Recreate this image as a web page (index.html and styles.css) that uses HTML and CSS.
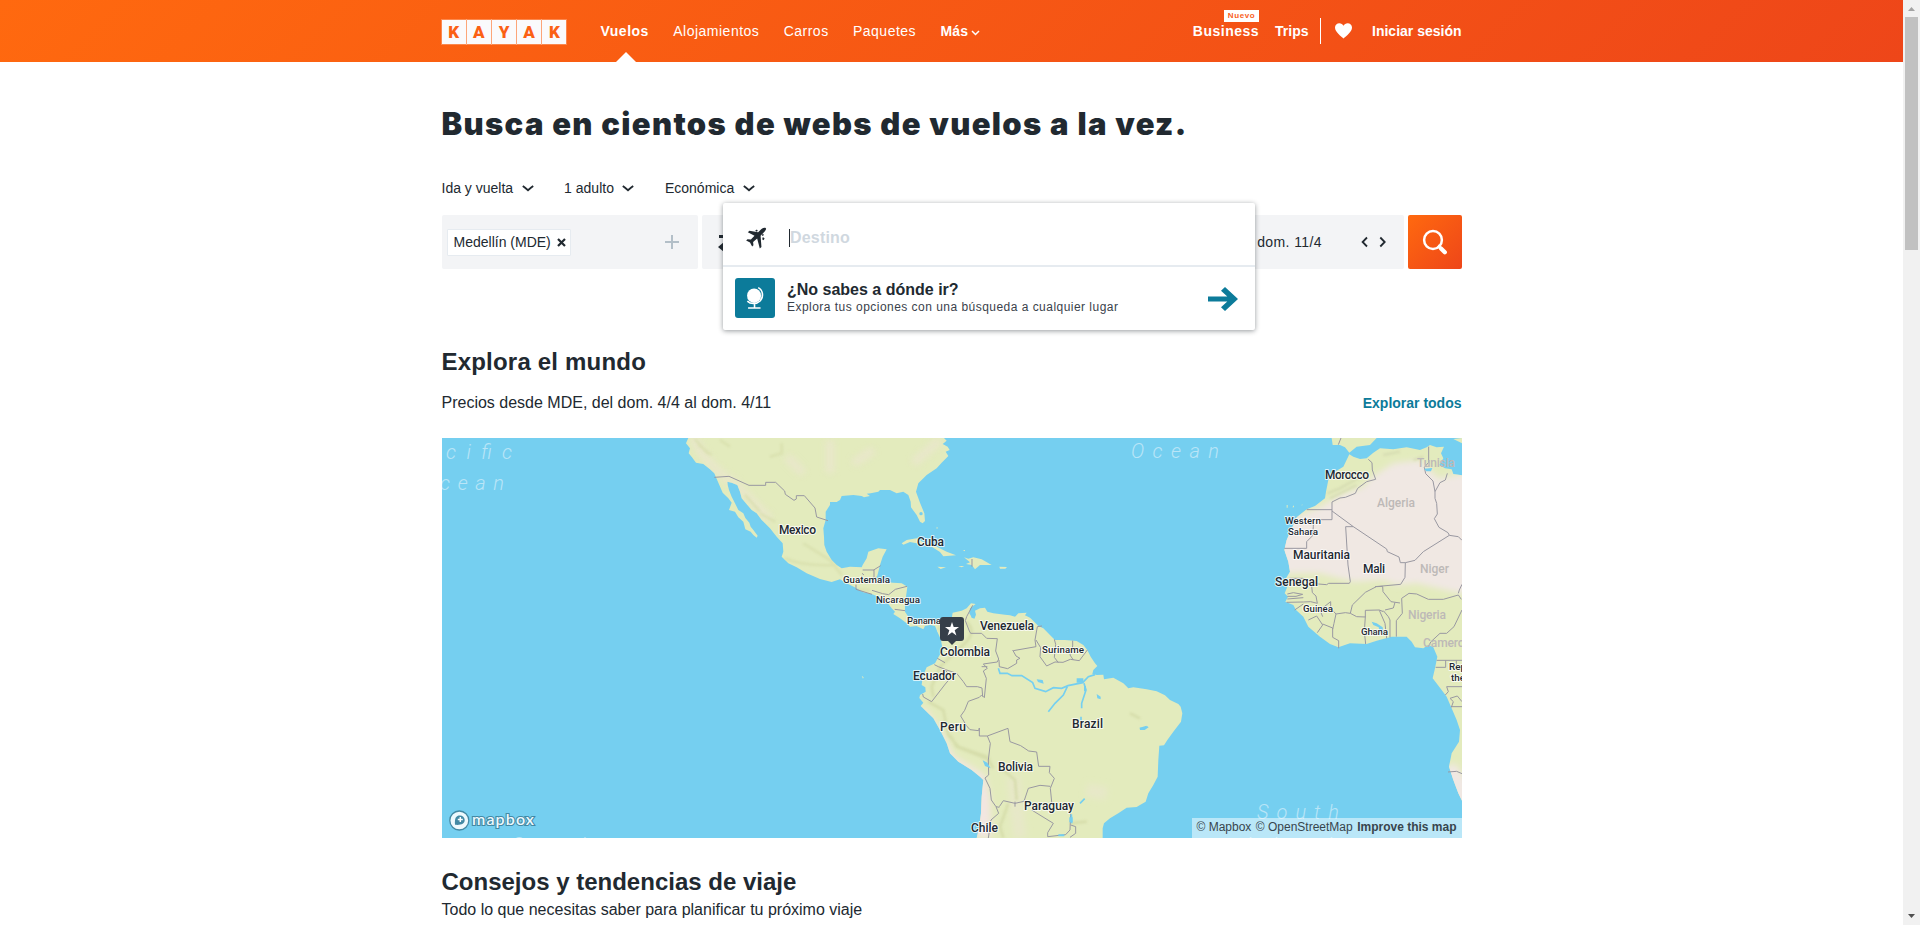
FILE: index.html
```html
<!DOCTYPE html>
<html lang="es">
<head>
<meta charset="utf-8">
<title>KAYAK - Vuelos</title>
<link rel="stylesheet" href="styles.css">
</head>
<body>
<div class="page">
  <header class="header">
    <div class="header-inner">
      <div class="logo"><span>K</span><span>A</span><span>Y</span><span>A</span><span>K</span></div>
      <nav class="nav">
        <a class="nav-item active">Vuelos</a>
        <a class="nav-item">Alojamientos</a>
        <a class="nav-item">Carros</a>
        <a class="nav-item">Paquetes</a>
        <a class="nav-item more">Más<svg width="9" height="6" viewBox="0 0 9 6"><path d="M1 1l3.500 3.500L8 1" fill="none" stroke="#fff" stroke-width="1.500"/></svg></a>
      </nav>
      <div class="account">
        <a class="business">Business<span class="badge">Nuevo</span></a>
        <a class="trips">Trips</a>
        <span class="divider"></span>
        <svg class="heart" width="17" height="16" viewBox="0 0 17 16"><path d="M8.500 15.500C6 13.500 0 9 0 4.600C0 2 2 0.300 4.300 0.300C6.200 0.300 7.700 1.300 8.500 2.700C9.300 1.300 10.800 0.300 12.700 0.300C15 0.300 17 2 17 4.600C17 9 11 13.500 8.500 15.500Z" fill="#fff"/></svg>
        <a class="signin">Iniciar sesión</a>
      </div>
    </div>
  </header>

  <main class="main">
    <h1 class="title">Busca en cientos de webs de vuelos a la vez.</h1>
    <div class="filters">
      <span class="filter">Ida y vuelta<svg width="12" height="7" viewBox="0 0 12 7"><path d="M.8 1q2 1.500 5.200 4.200Q9.200 2.500 11.200 1" /></svg></span>
      <span class="filter">1 adulto<svg width="12" height="7" viewBox="0 0 12 7"><path d="M.8 1q2 1.500 5.200 4.200Q9.200 2.500 11.200 1" /></svg></span>
      <span class="filter">Económica<svg width="12" height="7" viewBox="0 0 12 7"><path d="M.8 1q2 1.500 5.200 4.200Q9.200 2.500 11.200 1" /></svg></span>
    </div>

    <div class="search">
      <div class="origin">
        <span class="chip">Medellín (MDE)<svg width="9" height="9" viewBox="0 0 9 9"><path d="M1 1l7 7M8 1L1 8" stroke="#212930" stroke-width="2.200"/></svg></span>
        <svg class="plus" width="14" height="14" viewBox="0 0 14 14"><path d="M7 0v14M0 7h14" stroke="#b3bfc8" stroke-width="2"/></svg>
      </div>
      <div class="dates">
        <svg class="swap" width="20" height="20" viewBox="0 0 20 20"><path d="M2 3h11V0l6 4.500L13 9V6H2zM18 13H7v-3L1 15l6 5v-4h11z" fill="#212930"/></svg>
        <span class="date">dom. 11/4</span>
        <svg class="steps" width="25" height="12" viewBox="0 0 25 12"><path d="M6 1.500L1.600 6L6 10.500M19.300 1.500L23.700 6L19.300 10.500" fill="none" stroke="#212930" stroke-width="1.800"/></svg>
      </div>
      <button class="go"><svg width="26" height="26" viewBox="0 0 26 26"><circle cx="11" cy="11" r="8.900" fill="none" stroke="#fff" stroke-width="2.500"/><path d="M16.500 15.500l4 2.500l3.800 3.800a2 2 0 0 1-3 3l-3.800-3.800l-2.200-3.500z" fill="#fff"/></svg></button>

      <div class="popup">
        <div class="destination">
          <svg width="22" height="22" viewBox="0 0 24 25"><path d="M23.200 1.300C22 .2 19.600 1 18.200 2.400L14.400 6L4.500 4.200L2.700 6L10.300 10L6.200 14.300L2.300 13.900L.8 15.400L5.200 17.700L7.600 22.200L9.100 20.700L8.700 17L13.300 13L16.300 24.500L18.200 22.700L17.200 10L21.300 5.800C22.800 4.200 24 2.300 23.200 1.300Z" fill="#212930"/><path d="M11 4.300l2-1.500 1 1.500-1 1zM19 14l1.500 1 1.300-2-2-1.500zM18.500 9l1 1.300 1.500-1.300-1-1.200z" fill="#212930"/></svg>
          <span class="placeholder">Destino</span>
        </div>
        <div class="anywhere">
          <span class="globe"><svg width="22" height="24" viewBox="0 0 22 26"><ellipse cx="10" cy="10.500" rx="7.600" ry="7.900" fill="#fff"/><path d="M14.500 1.800C20 4.800 20.500 12 16.500 16.200C12.500 20.200 6 19.700 2.700 16.400M10.500 19v4M3.500 23.800h13.500" fill="none" stroke="#fff" stroke-width="1.700"/></svg></span>
          <div class="anywhere-text"><strong>¿No sabes a dónde ir?</strong><span>Explora tus opciones con una búsqueda a cualquier lugar</span></div>
          <svg class="arrow" width="30" height="24" viewBox="0 0 30 26" preserveAspectRatio="none"><path d="M0 10.300h19.300l-6.300-6.300L17 0l13 13l-13 13l-4-4l6.300-6.300H0z" fill="#0c7b9a"/></svg>
        </div>
      </div>
    </div>

    <h2 class="section-title explore">Explora el mundo</h2>
    <div class="explore-row"><span>Precios desde MDE, del dom. 4/4 al dom. 4/11</span><a>Explorar todos</a></div>

    <div class="map">
      <svg width="1020" height="400" viewBox="442 438 1020 400">
        <defs><filter id="soft" x="-30%" y="-30%" width="160%" height="160%"><feGaussianBlur stdDeviation="9"/></filter>
        <filter id="fine"><feGaussianBlur stdDeviation="2.500"/></filter>
        <clipPath id="naClip"><use href="#na"/></clipPath><clipPath id="saClip"><use href="#sa"/></clipPath><clipPath id="afClip"><use href="#af"/></clipPath></defs>
        <rect x="442" y="438" width="1020" height="400" fill="#75cff0"/>
        <!-- North and Central America -->
        <g transform="translate(660 430) scale(.33333)">
          <path id="na" class="land" d="M85 24L78 40L90 55L86 70L96 82L108 98L130 102L150 118L163 130L168 142L178 165L188 188L205 205L215 218L207 240L225 245L235 262L250 275L256 298L272 305L280 315L290 323L293 317L280 300L272 290L268 278L256 264L250 250L235 240L225 220L215 200L207 180L203 165L202 155L215 158L232 165L240 185L245 205L262 225L275 240L290 250L305 270L330 295L350 320L368 340L370 365L365 380L385 400L410 412L440 430L480 447L515 456L540 448L560 460L590 475L610 487L635 492L655 500L680 515L695 535L705 545L700 552L720 565L740 580L750 590L770 588L790 598L795 588L810 585L825 588L835 610L860 610L850 580L800 570L780 580L760 575L745 560L735 545L735 525L738 500L742 470L725 460L700 458L660 455L650 445L655 425L660 405L668 380L680 358L655 355L625 365L620 385L608 405L605 412L570 410L545 415L530 405L515 390L500 365L493 345L492 320L490 295L497 270L497 245L510 225L510 216L530 216L540 210L545 198L580 195L605 198L612 202L630 198L620 191L632 190L655 185L660 180L690 180L710 190L730 185L745 195L752 215L753 232L770 255L780 275L788 280L795 273L793 250L780 218L768 185L775 160L800 135L830 115L845 98L865 78L857 65L869 60L863 50L848 42L860 32L852 24Z"/>
          <g clip-path="url(#naClip)"><g filter="url(#soft)" fill="none" stroke="#ebe6cf" stroke-width="26" opacity=".75"><path d="M100 20Q130 100 230 165L330 270M380 80L430 130M510 30V130M580 100L640 60M760 100L840 30"/></g>
          <g filter="url(#fine)" fill="none" stroke="#d5dca8" stroke-width="8" opacity=".6"><path d="M105 28L145 72M115 45L155 75M180 30L210 50M365 40V70L330 80M255 195L300 245M375 385Q430 410 530 405M430 340L510 390L545 435M300 250L345 275M590 478L630 480"/></g></g>
          <g class="land"><path d="M725 340L740 330L770 325L795 340L830 350L860 365L888 376L850 379L840 366L815 350L770 340L750 336L730 344ZM912 382L925 386L940 382L965 388L995 405L960 405L945 418L935 405L918 402L930 397ZM832 410L858 412L842 417ZM895 408h18l-8 4zM1018 410l23 1l-5 5h-16zM830 290l4 4-4 3zM908 360h7v4zM605 737l6 5-2 4z"/></g>
          <path class="border" d="M163 142L207 139L267 166H317V157H347L374 183L376 193L402 211L409 207V197H433L465 234L470 261L504 272M608 420H642V446L649 441M588 464V478L636 493M636 481L668 491L686 494L706 478L741 469M606 430L612 435M641 420L662 407M936 387V410M704 538L735 542"/>
          <circle cx="783" cy="251" r="5" fill="#75cff0"/>
        </g>
        <!-- South America -->
        <g transform="translate(880 580) scale(.33333)">
          <path id="sa" class="land" d="M170 150L175 130L190 128L215 115L218 98L245 92L260 85L273 70L287 72L270 85L268 100L275 112L283 116L288 104L285 92L300 85L315 83L322 95L340 100L375 104L390 106L405 110L415 100L440 98L435 106L450 113L458 121L475 138L490 145L510 165L525 180L555 180L590 183L610 195L622 210L632 230L645 250L652 258L640 270L637 282L650 285L670 284L672 298L700 293L730 310L745 325L760 322L800 328L830 334L855 346L870 360L895 372L902 380L907 400L903 425L880 455L862 480L852 496L838 497L835 540L833 590L820 615L805 640L797 665L780 675L770 681L740 683L715 700L690 715L672 730L668 745V774H290L298 740L303 700L305 650L310 600L300 590L275 570L235 545L210 520L200 490L180 450L160 415L140 395L122 378L130 368L118 354L120 345L137 335L136 322L125 315L128 290L140 262L165 250L175 232L188 210L183 180Z"/>
          <g clip-path="url(#saClip)">
            <g filter="url(#soft)"><path d="M112 380L140 390L185 455L222 528L315 585L330 650L335 774H285V600L200 550Z" fill="#f2e6e1"/><path d="M400 590L420 774M620 630L680 640" stroke="#e7e8c8" stroke-width="40" fill="none"/></g>
            <g filter="url(#fine)" fill="none" stroke="#d2d9a5" stroke-width="8" opacity=".75"><path d="M260 125Q290 155 255 190L180 260L155 320L160 350M145 365L190 390L205 465L235 500L320 530L340 565M210 465L230 500L330 540M370 570L405 600L410 660M385 670L360 740L370 774M175 140L190 160M600 430L618 438M570 730L620 725M750 400L780 415"/></g>
          </g>
          <path class="border" d="M278 76L260 110L256 122L268 153L272 160H305L320 175L352 176L347 213L356 237L352 246L310 252L322 265L310 273L319 295L313 353L305 345L298 352L265 364L254 391L242 408L260 438L270 449L296 452L298 444V468H322L384 445L390 485L422 497L446 513L470 516L476 559H510L508 578L523 595L511 625L516 675M163 254L175 260L200 270L230 280L250 305L260 320H292L306 324L308 350M192 266L214 291L196 312L155 365L130 351L128 342M322 468L331 490L325 540L326 585L315 594L330 625L334 660L348 680L358 682M348 680L356 700L333 720L325 774M358 680L370 662L405 670L432 664L445 625L480 616L511 619M357 240L358 260L383 266L410 250V240L420 235L408 228L398 210M400 212L468 200L465 180L472 140L486 138M468 180L482 203L480 230L500 258L525 246L549 247L571 238L598 242L622 210M523 178L527 193L523 232L535 248M578 182V198L570 225L580 240M455 690L520 730L503 758V770L557 764L570 750L572 700M572 735L587 740V760L570 772M172 235L195 248M305 260H322M405 665V680"/>
          <path class="river" d="M355 265L360 280H382L396 287H425L458 308L465 325L497 335L520 323L545 325L564 317L608 308L625 290L645 284M562 320L550 345L525 370L505 395M612 310L618 330L605 370V385M600 670L614 656M574 703L575 730M603 410V430M780 446L800 440" />
          <path fill="#75cff0" d="M470 298L488 300L491 311L474 306ZM650 342L662 350V358L652 355ZM308 541L322 548L332 565L315 558ZM779 443h14l8-5 5 4-12 8h-14zM568 712h10v15h-10zM535 763h18v6h-18zM590 295h20v13h-20zM612 318h6v16h-6zM273 92l12 0-2 23-8-1z"/>
        </g>
        <!-- Africa and southern Europe -->
        <g transform="translate(1260 430) scale(.33333)">
          <path class="land" d="M215 24L218 45L240 45L255 52L268 68L290 50L330 45L350 24ZM580 27L606 40V24ZM80 225h3v8h-3zM97 232h5v-6zM124 226h3v-3zM130 213h4z"/>
          <path id="af" class="land" d="M268 73L250 110L225 125L205 150L198 185L195 205L165 228L140 238L110 262L100 285L80 330L73 360L85 395L90 425L75 450L82 470L74 490L84 500L76 515L100 525L108 540L130 560L145 590L180 620L210 642L235 652L270 640L320 642L350 632L395 620L440 620L455 635L465 652L490 655L505 645L520 652L532 680L525 715L518 745L545 780L560 800L573 830L590 870L600 900L597 935L575 970L567 1010L580 1050L595 1090L606 1112L615 1112V137L580 132L575 118L555 115L538 105L550 85L543 70L552 50L530 52L510 45L500 52L480 60L440 52L400 58L360 55L340 68L320 85L300 87L280 80Z"/>
          <g clip-path="url(#afClip)"><path filter="url(#soft)" d="M40 440L90 430L180 430L280 455L370 450L410 465L470 460L640 500V125L535 145L480 90L400 100L330 145L310 170L240 195L180 230L40 290ZM585 1000L560 1010L550 1030L590 1130H640V1080Z" fill="#f0e8e3"/><path filter="url(#fine)" fill="none" stroke="#d4dab0" stroke-width="7" opacity=".8" d="M202 190L240 175L310 135M210 205L290 165M370 75L420 65M460 90L490 80"/></g>
          <path class="border" d="M235 44L243 24M325 88L336 98L337 120L347 148L320 155L293 175L286 190L256 202L240 204L216 216V269H160V290L157 318L140 335V355H73M140 239H216M216 243L280 290L380 357L382 365L417 381L421 398H436L435 442L422 463L345 470M280 290H257L264 405L271 455L268 460H206L200 464L175 462L128 445H88M436 398L465 391L490 365L568 316L564 308L537 292L523 266L532 252L530 220L525 205V185L519 153L497 131L493 112L506 97V50M525 185L540 158L556 150L562 130M568 316L595 320L606 331M155 468L157 488L168 498L172 520L152 515L130 516L80 517M82 492L100 488L128 493L108 499H82M82 507L130 503M104 540L130 522M145 570L170 558L188 585L172 608M188 582L218 594V622L236 632V655M188 560L180 540L212 515V535L228 552L222 580L218 598M228 552L256 548L271 550L277 525L316 487L349 470L368 469L369 485L393 515L420 519M271 550L290 560L316 561V541L358 540L370 545M316 560L313 605L317 642M358 541L375 580L380 625M370 542L385 560L390 570V622M375 540L400 534L405 517M409 620V572L427 550L425 505L447 490L470 492L505 508H550L595 495L604 508M595 490L598 480L606 463M505 650L513 635L540 610H560L582 590L606 540M530 691H606M527 712H557V691M589 691V705M606 770H560L565 785L556 795M573 830H606M574 832L580 815L570 805L592 798L606 815M564 1026L590 1024L606 1031"/>
          <path fill="#75cff0" d="M335 575L350 580L368 592L372 618L360 610L356 592L340 585ZM492 116l25 -2-4 10h-14z"/>
        </g>
        <g class="ocean"><text x="446" y="459" textLength="66">cific</text><text x="440" y="490" textLength="64">cean</text><text x="1131" y="458" textLength="88">Ocean</text><text x="1257" y="819" textLength="82">South</text><text x="1243" y="852" textLength="105">Atlantic</text><text x="512" y="852" textLength="80">South</text></g>
        <g class="labels">
          <text x="779" y="534" textLength="37">Mexico</text><text x="917" y="546" textLength="27">Cuba</text><text x="980" y="630" textLength="54">Venezuela</text><text x="940" y="656" textLength="50">Colombia</text><text x="913" y="680" textLength="43">Ecuador</text><text x="940" y="731" textLength="26">Peru</text><text x="1072" y="728" textLength="31">Brazil</text><text x="998" y="771" textLength="35">Bolivia</text><text x="1024" y="810" textLength="50">Paraguay</text><text x="971" y="832" textLength="27">Chile</text>
          <text x="1325" y="479" textLength="44">Morocco</text><text x="1293" y="559" textLength="57">Mauritania</text><text x="1363" y="573" textLength="22">Mali</text><text x="1275" y="586" textLength="43">Senegal</text>
          <g class="small"><text x="843" y="583" textLength="47">Guatemala</text><text x="876" y="603" textLength="44">Nicaragua</text><text x="907" y="624" textLength="34">Panama</text><text x="1042" y="653" textLength="42">Suriname</text><text x="1285" y="524" textLength="36">Western</text><text x="1288" y="535" textLength="30">Sahara</text><text x="1303" y="612" textLength="30">Guinea</text><text x="1361" y="635" textLength="27">Ghana</text><text x="1449" y="670">Republic of</text><text x="1451" y="681">the Congo</text></g>
          <g class="faded"><text x="1417" y="467" textLength="38">Tunisia</text><text x="1377" y="507" textLength="38">Algeria</text><text x="1420" y="573" textLength="29">Niger</text><text x="1408" y="619" textLength="38">Nigeria</text><text x="1423" y="647" textLength="55">Cameroon</text></g>
        </g>
        <g><path d="M943 617h18a3 3 0 0 1 3 3v18a3 3 0 0 1-3 3h-5l-4 4-4-4h-5a3 3 0 0 1-3-3v-18a3 3 0 0 1 3-3z" fill="#363f49"/><path d="M952 622l1.700 5h5.300l-4.300 3.200 1.700 5.200-4.400-3.200-4.400 3.200 1.700-5.200-4.300-3.200h5.300z" fill="#fff"/></g>
        <g class="mapbox"><circle cx="459.300" cy="820.500" r="9.500" fill="#eef9fd" stroke="#4389a4" stroke-width="1.300"/><path d="M455 824.800C454.500 818 456 815.500 460 815.500A4.700 4.700 0 0 1 464.700 820C464.700 824 461 825.300 455 824.800Z" fill="#4389a4"/><path d="M460.300 817v5M457.800 819.500h5" stroke="#fff" stroke-width="1.500"/><text x="472" y="824.500" textLength="62">mapbox</text></g>
      </svg>
      <div class="attribution"><span>© Mapbox</span> <span>© OpenStreetMap</span> <strong>Improve this map</strong></div>
    </div>

    <h2 class="section-title tips">Consejos y tendencias de viaje</h2>
    <p class="tips-sub">Todo lo que necesitas saber para planificar tu próximo viaje</p>
  </main>
</div>
<div class="scrollbar"><svg width="17" height="17" viewBox="0 0 17 17"><path d="M5 11l3.500-4 3.500 4z" fill="#a3a3a3"/></svg><div class="thumb"></div><svg class="down" width="17" height="17" viewBox="0 0 17 17"><path d="M5 6l3.500 4L12 6z" fill="#505050"/></svg></div>
</body>
</html>
```
FILE: styles.css
```css
* { box-sizing: border-box; }
body { margin: 0; height: 925px; overflow: hidden; display: flex; background: #fff; color: #212930; font: 14px/20px "Liberation Sans", Arial, sans-serif; }
h1, h2, p { margin: 0; }
svg { display: block; flex: none; }
.page { width: 1903px; height: 925px; overflow: hidden; }
.header { height: 62px; background: linear-gradient(135deg, #ff690f 0%, #ee4619 100%); color: #fff; }
.header-inner { width: 1020px; height: 62px; margin-left: 441.500px; display: flex; align-items: center; }
.logo { display: flex; gap: 1px; width: 125px; }
.logo span { width: 24.200px; height: 24px; margin-top: 1px; background: #fafafc; color: #fb6014; font: 900 17px/25px Roboto, sans-serif; text-align: center; box-shadow: 0 0 0 1px rgba(255,255,255,.25); }
.nav { display: flex; gap: 24.300px; margin-left: 34px; letter-spacing: .5px; height: 62px; line-height: 62px; white-space: nowrap; }
.nav-item.active, .nav-item.more { font-weight: 700; }
.active { position: relative; }
.active::after { content: ""; position: absolute; bottom: 0; left: 15px; border: solid transparent; border-width: 0 10px 10px; border-bottom-color: #fff; }
.more { display: flex; align-items: center; gap: 3px; letter-spacing: .2px; }
.more svg { margin-top: 3px; }
.account { margin-left: auto; display: flex; align-items: center; font-weight: 700; line-height: 62px; height: 62px; white-space: nowrap; }
.business { position: relative; letter-spacing: .5px; margin-right: 16px; }
.badge { position: absolute; right: 0; top: 10px; width: 35px; height: 12px; background: #fff; color: #f9601c; font: 700 8px/11px "Liberation Sans", sans-serif; letter-spacing: .6px; text-align: center; }
.divider { width: 1px; height: 26px; background: #fff; margin: 0 14px 0 11px; }
.heart { margin-right: 20.500px; }
.main { width: 1020px; margin-left: 441.500px; padding-top: 42px; }
.title { font: 900 31px/40px Inter, sans-serif; letter-spacing: 1.330px; white-space: nowrap; height: 40px; }
.filters { display: flex; margin-top: 34px; gap: 30.500px; height: 20px; }
.filter { display: flex; align-items: center; gap: 8.500px; }
.filter path { fill: none; stroke: #212930; stroke-width: 1.800px; }
.search { position: relative; display: flex; gap: 4px; margin-top: 17px; height: 54px; }
.origin { width: 256px; background: #f3f4f6; border-radius: 2px; display: flex; align-items: center; justify-content: space-between; padding: 0 19px 0 5px; }
.chip { display: flex; align-items: center; gap: 6px; height: 27px; padding: 0 4px 0 6px; background: #fff; border: 1px solid #e6ebf0; border-radius: 1px; }
.dates { flex: 1; background: #f3f4f6; border-radius: 2px; display: flex; align-items: center; padding: 0 18px 0 15px; }
.date { margin-left: auto; letter-spacing: .4px; }
.steps { margin-left: 38.500px; }
.go { width: 54px; height: 54px; border: 0; border-radius: 2px; padding: 0; display: flex; align-items: center; justify-content: center; background: linear-gradient(135deg, #ff690f, #ee4619); }
.popup { position: absolute; left: 281.500px; top: -12px; width: 532px; height: 127px; background: #fff; border-radius: 2px; box-shadow: 0 1px 5px rgba(33,41,48,.48); }
.destination { height: 64px; border-bottom: 2px solid #e6ebf0; display: flex; align-items: center; padding: 7px 0 0 22px; }
.placeholder { margin-left: 22px; border-left: 1px solid #212930; height: 18px; line-height: 17px; color: #d0d8df; font-size: 16px; font-weight: 700; letter-spacing: .2px; }
.anywhere { height: 63px; display: flex; align-items: center; padding: 0 17px 1px 12px; }
.globe { width: 40px; height: 40px; border-radius: 3px; background: #0c7b9a; display: flex; align-items: center; justify-content: center; }
.anywhere-text { margin-left: 12px; display: flex; flex-direction: column; }
.anywhere-text strong { font-size: 16px; line-height: 18px; }
.anywhere-text span { font-size: 12px; line-height: 16px; letter-spacing: .47px; color: #3a424b; }
.arrow { margin: 2px 0 0 auto; }
.section-title { font-size: 24px; line-height: 30px; font-weight: 700; white-space: nowrap; }
.explore { margin-top: 78px; letter-spacing: .2px; }
.explore-row { display: flex; justify-content: space-between; margin-top: 16px; height: 20px; font-size: 16px; }
.explore-row a { color: #0c7b9a; font-size: 14px; font-weight: 700; line-height: 20px; }
.map { position: relative; margin-top: 25px; height: 400px; overflow: hidden; }
.land { fill: #e3ebbd; }
.border { fill: none; stroke: #9998a1; stroke-width: 3; stroke-linejoin: round; }
.river { fill: none; stroke: #75cff0; stroke-width: 5; }
.ocean { fill: #b9e5f7; font: italic 300 20px Roboto, sans-serif; }
.labels { font: 500 12px Roboto, sans-serif; fill: #222831; stroke: #fff; stroke-width: 2px; stroke-opacity: .75; paint-order: stroke; stroke-linejoin: round; }
.small { font-size: 9.800px; }
.faded { fill: #bdb9b7; stroke: none; }
.mapbox text { font: 600 16px Lato, sans-serif; fill: #eef9fd; stroke: #4389a4; stroke-width: 2.200px; paint-order: stroke; }
.attribution { position: absolute; right: 0; bottom: 0; width: 270px; height: 20px; padding: 0 5px; background: rgba(255,255,255,.5); color: #38454d; font-size: 12px; line-height: 19px; display: flex; justify-content: space-between; white-space: nowrap; }
.tips { margin-top: 29px; }
.tips-sub { margin-top: 3px; font-size: 16px; }
.scrollbar { width: 17px; height: 925px; background: #f1f1f1; display: flex; flex-direction: column; }
.thumb { width: 13px; height: 233px; margin-left: 2px; background: #c1c1c1; }
.down { margin-top: auto; }
```
